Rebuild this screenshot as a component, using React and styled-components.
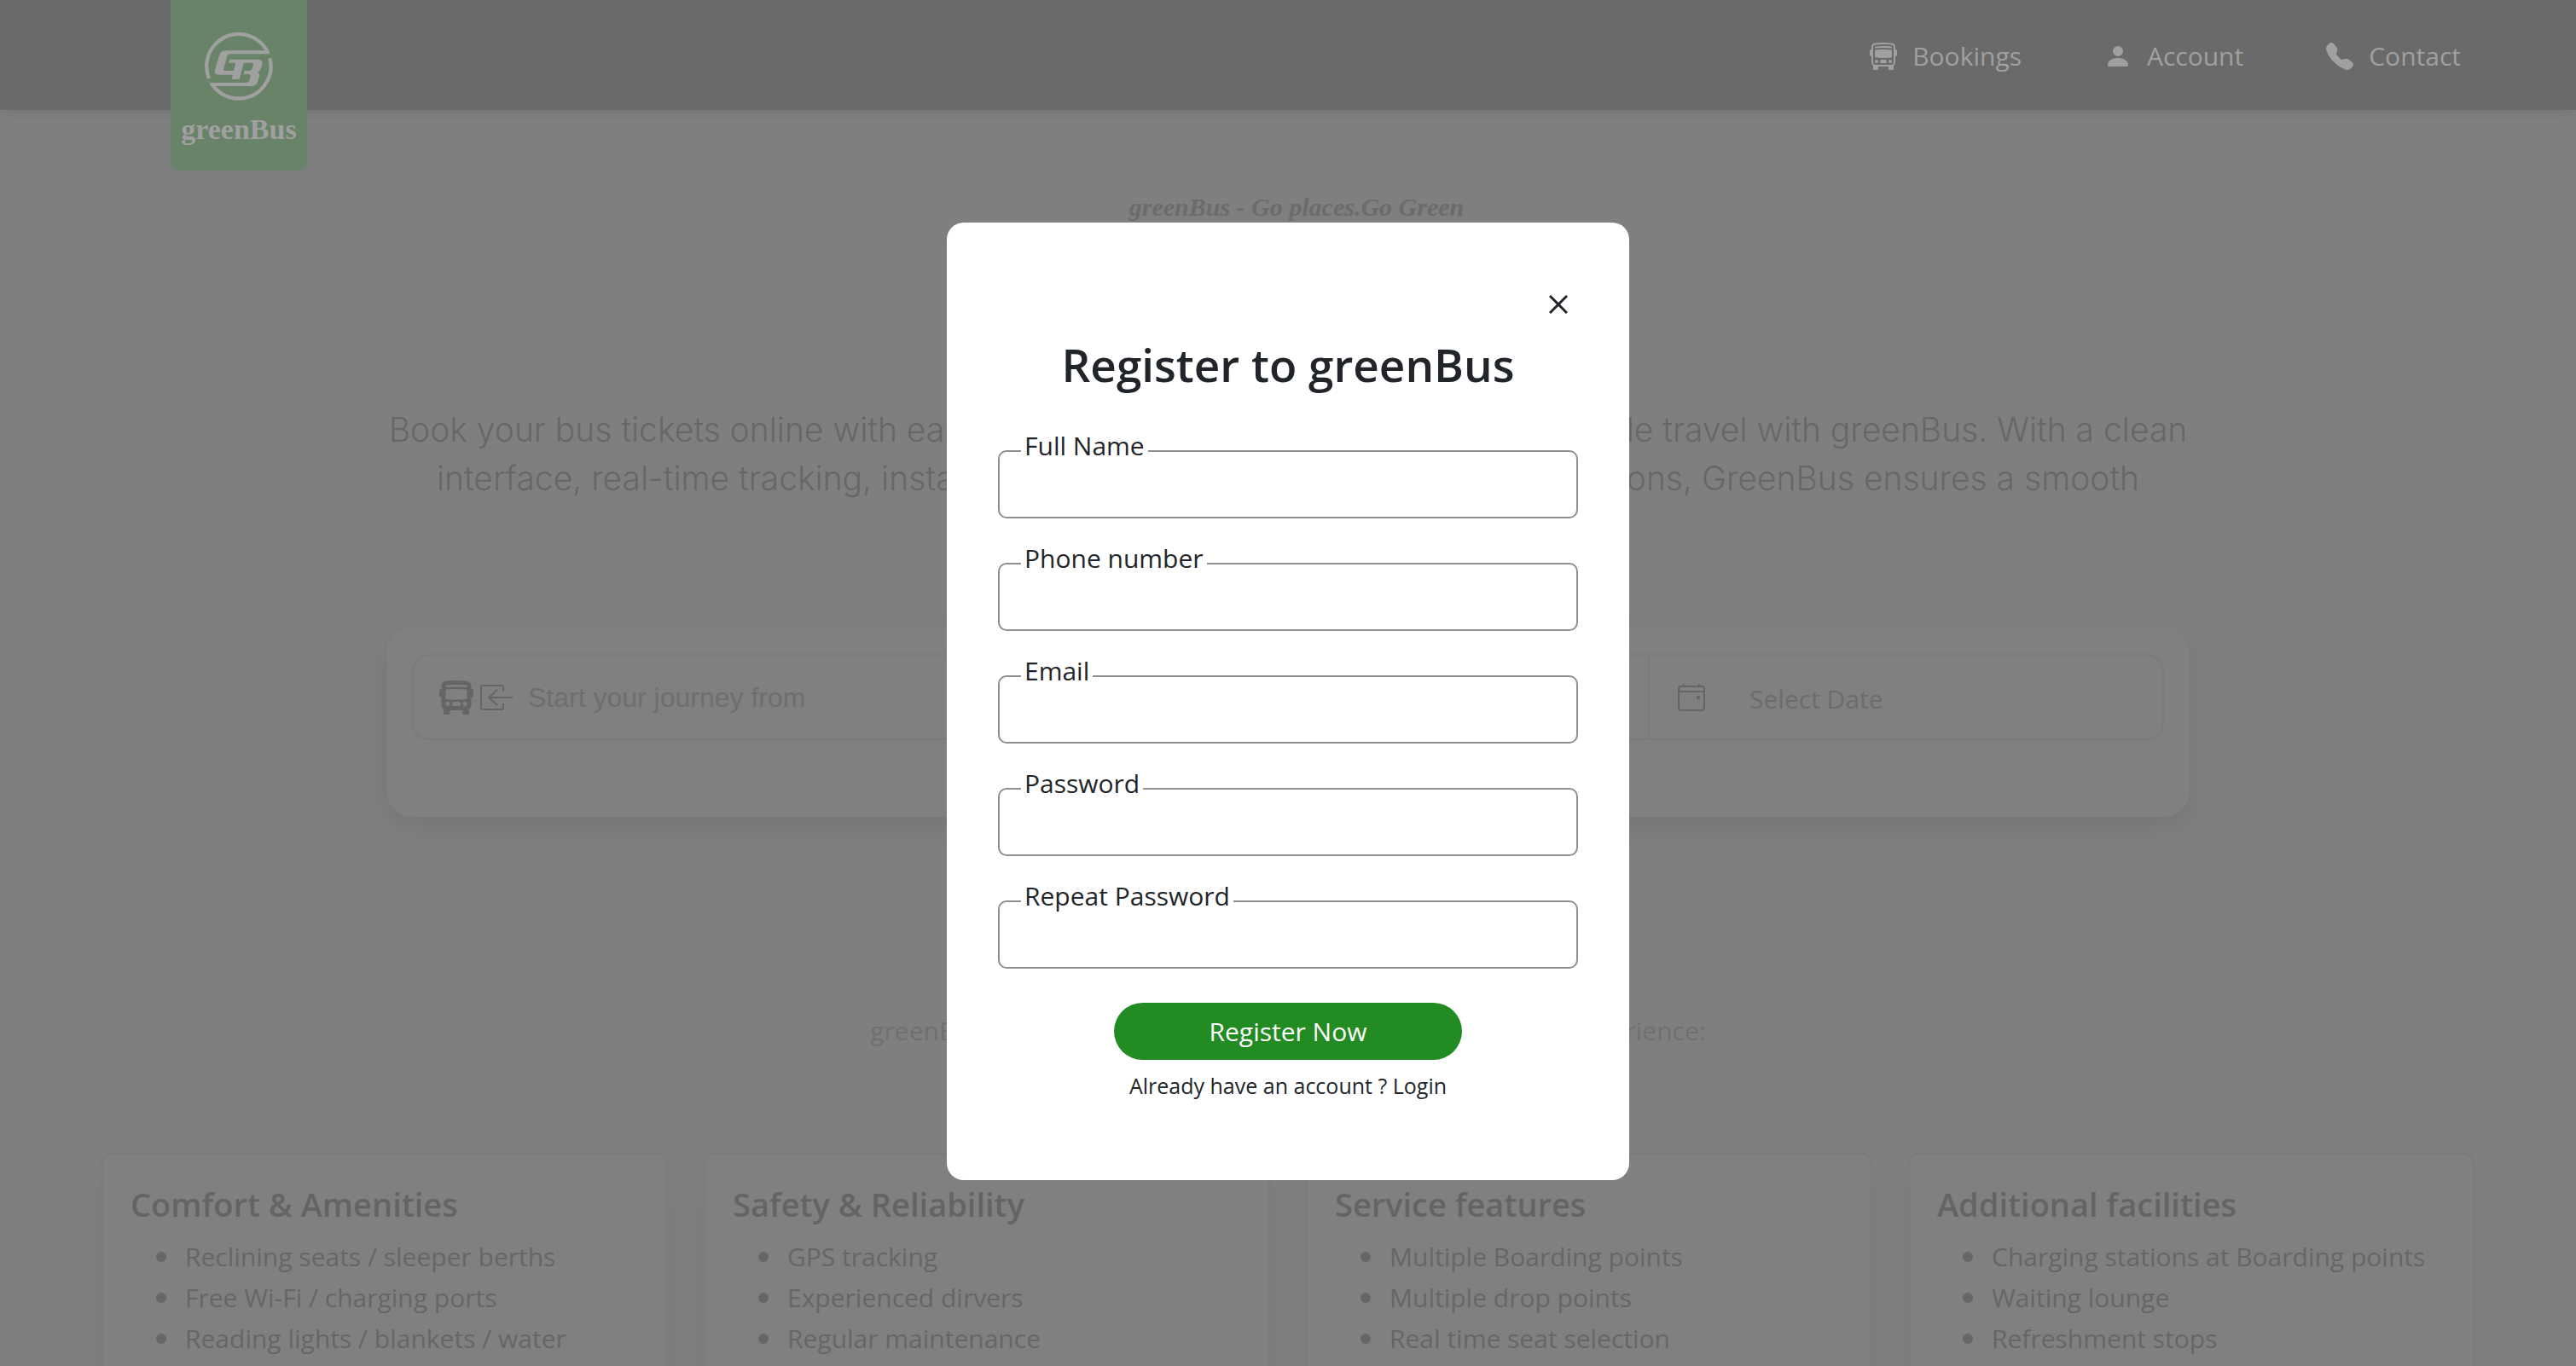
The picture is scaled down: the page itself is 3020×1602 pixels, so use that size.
import React from "react";
import styled, { createGlobalStyle } from "styled-components";
import {
  BsBusFront,
  BsBusFrontFill,
  BsPersonFill,
  BsTelephoneFill,
} from "react-icons/bs";

const GlobalStyle = createGlobalStyle`
  *, *::before, *::after { box-sizing: border-box; }
  body {
    margin: 0;
    background: #7f7f7f;
    color: #212529;
    font-family: "Open Sans", "Noto Sans", sans-serif;
    font-size: 30px;
    line-height: 48px;
  }
  h1, h2, h3, p, ul { margin: 0; }
`;

const Page = styled.div`
  height: 100vh;
  overflow: hidden;
  display: flex;
  flex-direction: column;
  color: #666;
`;

const Header = styled.header`
  flex: none;
  height: 129px;
  padding: 0 135px 0 200px;
  display: flex;
  align-items: flex-start;
  justify-content: space-between;
  background: #6a6a6a;
  box-shadow: 0 2px 16px rgba(0, 0, 0, 0.09);
`;

const Brand = styled.a`
  width: 160px;
  height: 200px;
  padding-top: 37px;
  display: flex;
  flex-direction: column;
  align-items: center;
  gap: 10px;
  border-radius: 0 0 10px 10px;
  background: #698369;
  color: #a0a0a0;
  text-decoration: none;
`;

const BrandName = styled.span`
  font: 700 34px/48px "Liberation Serif", serif;
`;

const Nav = styled.nav`
  display: flex;
  gap: 97px;
  padding-top: 42px;
`;

const NavLink = styled.a`
  display: flex;
  align-items: center;
  gap: 18px;
  color: #a0a0a0;
  text-decoration: none;
`;

const Main = styled.main`
  display: flex;
  flex-direction: column;
`;

const Tagline = styled.p`
  margin-top: 90px;
  padding-left: 20px;
  text-align: center;
  font: italic 700 30px/48px "Liberation Serif", serif;
  color: #6b6b6b;
`;

const Intro = styled.p`
  margin-top: 208px;
  text-align: center;
  font: 300 39px/57px Inter, sans-serif;
  color: #676767;
`;

const SearchCard = styled.form`
  width: 70%;
  margin: 89px auto 0;
  padding: 32px 30px 90px;
  border-radius: 30px;
  background: #808080;
  box-shadow: 0 10px 30px rgba(0, 0, 0, 0.08);
`;

const SearchBar = styled.div`
  height: 101px;
  display: grid;
  grid-template-columns: 6fr 6fr 5fr;
  border: 2px solid #7b7b7b;
  border-radius: 20px;
`;

const SearchCell = styled.label`
  min-width: 0;
  padding: 0 30px;
  display: flex;
  align-items: center;
  gap: 8px;
  color: #656565;

  & + & {
    border-left: 2px solid #7b7b7b;
  }
`;

const SearchInput = styled.input`
  flex: 1;
  min-width: 0;
  padding: 0 0 0 8px;
  border: 0;
  outline: 0;
  background: transparent;
  color: inherit;
  font: 32px/48px "Liberation Sans", Arial, sans-serif;

  &::placeholder {
    color: #6e6e6e;
    opacity: 1;
  }
`;

const DateButton = styled.button`
  padding: 4px 0 0 43px;
  border: 0;
  background: transparent;
  color: #6c6c6c;
  font: inherit;
`;

const Lead = styled.p`
  margin-top: 227px;
  text-align: center;
  color: #707070;
`;

const Facilities = styled.section`
  margin-top: 119px;
  padding: 0 119px;
  display: grid;
  grid-template-columns: repeat(4, minmax(0, 1fr));
  gap: 42px;
`;

const Card = styled.article`
  min-height: 320px;
  padding: 30px 32px;
  border: 2px solid #7b7b7b;
  border-radius: 12px;
  background: #808080;
  box-shadow: 0 24px 32px rgba(0, 0, 0, 0.04);
`;

const CardTitle = styled.h3`
  font-size: 38px;
  line-height: 56px;
  font-weight: 600;
  color: #646464;
`;

const CardList = styled.ul`
  margin-top: 10px;
  padding-left: 30px;
  list-style: none;
`;

const CardItem = styled.li`
  display: flex;
  align-items: center;
  gap: 22px;

  &::before {
    content: "";
    width: 12px;
    height: 12px;
    border-radius: 50%;
    background: currentColor;
  }
`;

const Overlay = styled.div`
  position: fixed;
  inset: 0;
  display: flex;
  align-items: flex-start;
  justify-content: center;
  padding-top: 261px;
`;

const Dialog = styled.section`
  width: 800px;
  padding: 74px 60px 91px;
  display: flex;
  flex-direction: column;
  align-items: center;
  border-radius: 20px;
  background: #fff;
`;

const CloseButton = styled.button`
  align-self: flex-end;
  display: flex;
  padding: 11px 12px;
  border: 0;
  background: transparent;
  color: #212529;
`;

const DialogTitle = styled.h2`
  margin-top: 15px;
  font-size: 53px;
  line-height: 68px;
  font-weight: 600;
`;

const Form = styled.form`
  width: 100%;
  margin-top: 37px;
  display: flex;
  flex-direction: column;
  align-items: center;
  gap: 23px;
`;

const Field = styled.div`
  width: 100%;
  display: flex;
  flex-direction: column;
  align-items: flex-start;
`;

const FieldLabel = styled.label`
  z-index: 1;
  margin: 0 0 -19px 27px;
  padding: 0 4px;
  background: #fff;
`;

const FieldInput = styled.input`
  width: 100%;
  height: 80px;
  padding: 0 28px;
  border: 2px solid #8f8f8f;
  border-radius: 10px;
  background: transparent;
  color: inherit;
  font: inherit;
`;

const SubmitButton = styled.button`
  width: 60%;
  height: 67px;
  margin-top: 17px;
  border: 0;
  border-radius: 34px;
  background: #228b22;
  color: #fff;
  font: inherit;
`;

const LoginHint = styled.p`
  margin-top: 10px;
  font-size: 25px;
  line-height: 40px;
`;

const LoginLink = styled.a`
  color: inherit;
  text-decoration: none;
`;

const Emblem = () => (
  <svg width="80" height="81" viewBox="181 110 240 243" aria-hidden="true">
    <g fill="none" stroke="currentColor" strokeWidth="13">
      <path d="M196 275A113.500 113.500 0 0 1 301 118.500A113.500 113.500 0 0 1 404 186" />
      <path d="M410 204A113.500 113.500 0 0 1 301 345.500A113.500 113.500 0 0 1 204 292" />
    </g>
    <g fill="currentColor">
      <path d="M411 189H270Q262 189 260 196L247 243Q246 248 252 248H284L281 262H230Q213 262 217 246L231 196Q236 177 256 177H405Z" />
      <path d="M268 208H372Q386 210 383 226L379 240Q376 250 366 253Q376 256 373 268L368 284Q363 302 345 302H205L198 290H322Q336 290 338 282L342 268Q343 260 336 260H318L321 248H336Q346 248 348 240L352 228Q353 220 346 220H318L303 278H276L290 220H265Z" />
    </g>
  </svg>
);

const EnterIcon = () => (
  <svg width="40" height="32" viewBox="0 0 40 32" fill="none" stroke="currentColor" strokeWidth="2" aria-hidden="true">
    <path d="M27 9V4Q27 2 25 2H3Q1 2 1 4V28Q1 30 3 30H25Q27 30 27 28V23" />
    <path d="M38 16H10M20 7L10 16L20 25" />
  </svg>
);

const CalendarIcon = () => (
  <svg width="36" height="34" viewBox="-2 0 36 34" fill="none" stroke="currentColor" strokeWidth="2" aria-hidden="true">
    <rect x="2" y="4" width="30" height="28" rx="3" />
    <path d="M2 10H32M8 1V4M26 1V4" />
    <rect x="23" y="15" width="4" height="4" fill="currentColor" stroke="none" />
  </svg>
);

const CrossIcon = () => (
  <svg width="22" height="22" viewBox="0 0 22 22" stroke="currentColor" strokeWidth="3" aria-hidden="true">
    <path d="M1 1L21 21M21 1L1 21" />
  </svg>
);

const navItems = [
  { label: "Bookings", Icon: BsBusFront },
  { label: "Account", Icon: BsPersonFill },
  { label: "Contact", Icon: BsTelephoneFill },
];

const facilities = [
  {
    title: "Comfort & Amenities",
    items: ["Reclining seats / sleeper berths", "Free Wi-Fi / charging ports", "Reading lights / blankets / water"],
  },
  {
    title: "Safety & Reliability",
    items: ["GPS tracking", "Experienced dirvers", "Regular maintenance"],
  },
  {
    title: "Service features",
    items: ["Multiple Boarding points", "Multiple drop points", "Real time seat selection"],
  },
  {
    title: "Additional facilities",
    items: ["Charging stations at Boarding points", "Waiting lounge", "Refreshment stops"],
  },
];

const fields = [
  { id: "name", label: "Full Name", type: "text" },
  { id: "phone", label: "Phone number", type: "tel" },
  { id: "email", label: "Email", type: "email" },
  { id: "password", label: "Password", type: "password" },
  { id: "repeat", label: "Repeat Password", type: "password" },
];

export default function App() {
  return (
    <>
      <GlobalStyle />
      <Page>
        <Header>
          <Brand href="#home">
            <Emblem />
            <BrandName>greenBus</BrandName>
          </Brand>
          <Nav>
            {navItems.map(({ label, Icon }) => (
              <NavLink key={label} href={"#" + label.toLowerCase()}>
                <Icon size={32} />
                {label}
              </NavLink>
            ))}
          </Nav>
        </Header>
        <Main>
          <Tagline>greenBus - Go places.Go Green</Tagline>
          <Intro>
            Book your bus tickets online with ease and enjoy comfortable, safe and affordable travel with greenBus. With a clean
            <br />
            interface, real-time tracking, instant booking confirmations and seamless options, GreenBus ensures a smooth
            <br />
            travel experience.
          </Intro>
          <SearchCard>
            <SearchBar>
              <SearchCell>
                <BsBusFrontFill size={40} />
                <EnterIcon />
                <SearchInput aria-label="From" placeholder="Start your journey from" />
              </SearchCell>
              <SearchCell>
                <SearchInput aria-label="To" />
              </SearchCell>
              <SearchCell as="div">
                <CalendarIcon />
                <DateButton type="button">Select Date</DateButton>
              </SearchCell>
            </SearchBar>
          </SearchCard>
          <Lead>greenBus offers the following facilities for a smarter travel experience:</Lead>
          <Facilities>
            {facilities.map((group) => (
              <Card key={group.title}>
                <CardTitle>{group.title}</CardTitle>
                <CardList>
                  {group.items.map((item) => (
                    <CardItem key={item}>{item}</CardItem>
                  ))}
                </CardList>
              </Card>
            ))}
          </Facilities>
        </Main>
      </Page>
      <Overlay>
        <Dialog role="dialog" aria-modal="true" aria-labelledby="register-title">
          <CloseButton type="button" aria-label="Close">
            <CrossIcon />
          </CloseButton>
          <DialogTitle id="register-title">Register to greenBus</DialogTitle>
          <Form>
            {fields.map((field) => (
              <Field key={field.id}>
                <FieldLabel htmlFor={field.id}>{field.label}</FieldLabel>
                <FieldInput id={field.id} type={field.type} />
              </Field>
            ))}
            <SubmitButton type="button">Register Now</SubmitButton>
          </Form>
          <LoginHint>
            Already have an account ? <LoginLink href="#login">Login</LoginLink>
          </LoginHint>
        </Dialog>
      </Overlay>
    </>
  );
}
